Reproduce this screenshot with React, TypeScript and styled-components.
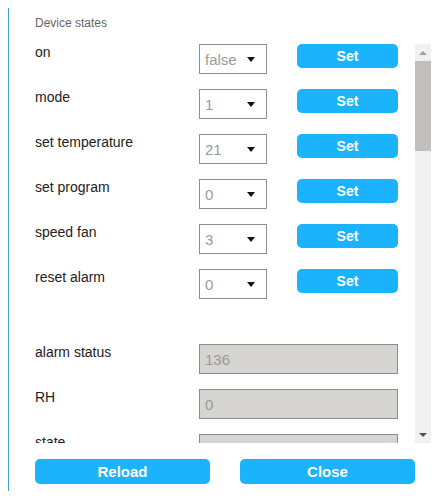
import React from 'react';
import styled, { createGlobalStyle } from 'styled-components';

const GlobalStyle = createGlobalStyle`
  body {
    margin: 8px;
    background: #ffffff;
    font-family: "Liberation Sans", Arial, sans-serif;
  }
`;

const Panel = styled.div`
  border-left: 1px solid #3ba3d8;
  padding: 8px 0 7px 26px;
  width: 397px;
`;

const Title = styled.div`
  font-size: 12px;
  line-height: 14px;
  color: #666666;
  margin-bottom: 14px;
`;

const ScrollFrame = styled.div`
  display: flex;
  height: 399px;
`;

const ScrollContent = styled.div`
  width: 380px;
  overflow: hidden;
`;

// drawn scrollbar, the page is photographed without native ones
const ScrollBar = styled.div`
  width: 16px;
  display: flex;
  flex-direction: column;
  background: #f1f1f1;
`;

const ScrollArrow = styled.div<{ $down?: boolean }>`
  height: 17px;
  display: flex;
  align-items: center;
  justify-content: center;

  &::before {
    content: '';
    width: 0;
    height: 0;
    border-left: 4px solid transparent;
    border-right: 4px solid transparent;
    ${({ $down }) =>
      $down ? 'border-top: 4px solid #505050;' : 'border-bottom: 4px solid #a3a3a3;'}
  }
`;

const ScrollTrack = styled.div`
  flex: 1;
`;

const ScrollThumb = styled.div`
  height: 90px;
  background: #c1bfbb;
`;

const Row = styled.div`
  display: flex;
  align-items: flex-start;
  height: 30px;
  margin-bottom: 15px;
`;

const Spacer = styled.div`
  height: 30px;
`;

const Label = styled.div`
  width: 164px;
  flex-shrink: 0;
  font-size: 14px;
  line-height: 16px;
  color: #222222;
`;

const SelectBox = styled.div`
  box-sizing: border-box;
  width: 68px;
  height: 30px;
  border: 1px solid #8f8f8f;
  display: flex;
  align-items: center;
  justify-content: space-between;
  padding: 0 11px 0 5px;
  font-size: 15px;
  color: #9b9b9b;
`;

const Arrow = styled.span`
  width: 0;
  height: 0;
  border-left: 4px solid transparent;
  border-right: 4px solid transparent;
  border-top: 5px solid #111111;
`;

const SetButton = styled.button`
  margin-left: 30px;
  width: 101px;
  height: 24px;
  border: none;
  border-radius: 5px;
  background: #1ab3fc;
  color: #ffffff;
  font-family: "Liberation Sans", Arial, sans-serif;
  font-weight: bold;
  font-size: 14px;
  padding: 0;
`;

const ReadOnlyField = styled.input`
  box-sizing: border-box;
  width: 199px;
  height: 30px;
  margin: 0;
  border: 1px solid #8c8c8c;
  background: #d7d5d1;
  color: #9a9a9a;
  font-family: "Liberation Sans", Arial, sans-serif;
  font-size: 15px;
  padding: 0 5px;
  outline: none;
`;

const Footer = styled.div`
  display: flex;
  gap: 30px;
  margin-top: 16px;
`;

const FooterButton = styled.button`
  width: 175px;
  height: 25px;
  border: none;
  border-radius: 5px;
  background: #1ab3fc;
  color: #ffffff;
  font-family: "Liberation Sans", Arial, sans-serif;
  font-weight: bold;
  font-size: 15px;
  padding: 0;
`;

const settable = [
  { name: 'on', value: 'false' },
  { name: 'mode', value: '1' },
  { name: 'set temperature', value: '21' },
  { name: 'set program', value: '0' },
  { name: 'speed fan', value: '3' },
  { name: 'reset alarm', value: '0' },
];

const readings = [
  { name: 'alarm status', value: '136' },
  { name: 'RH', value: '0' },
  { name: 'state', value: '0' },
];

export default function App() {
  return (
    <>
      <GlobalStyle />
      <Panel>
        <Title>Device states</Title>
        <ScrollFrame>
          <ScrollContent>
            {settable.map((item) => (
              <Row key={item.name}>
                <Label>{item.name}</Label>
                <SelectBox>
                  <span>{item.value}</span>
                  <Arrow />
                </SelectBox>
                <SetButton>Set</SetButton>
              </Row>
            ))}
            <Spacer />
            {readings.map((item) => (
              <Row key={item.name}>
                <Label>{item.name}</Label>
                <ReadOnlyField readOnly value={item.value} />
              </Row>
            ))}
          </ScrollContent>
          <ScrollBar>
            <ScrollArrow />
            <ScrollTrack>
              <ScrollThumb />
            </ScrollTrack>
            <ScrollArrow $down />
          </ScrollBar>
        </ScrollFrame>
        <Footer>
          <FooterButton>Reload</FooterButton>
          <FooterButton>Close</FooterButton>
        </Footer>
      </Panel>
    </>
  );
}
